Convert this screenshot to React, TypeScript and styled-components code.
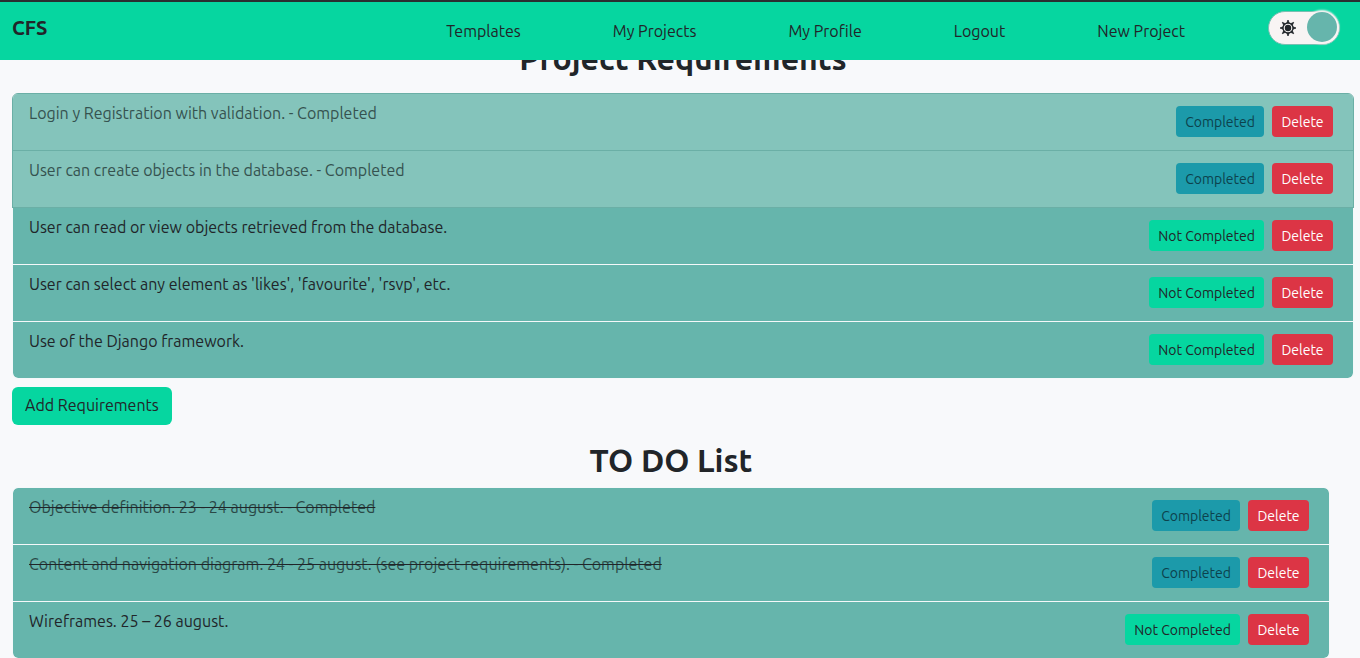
import React, { useState } from "react";
import styled, { createGlobalStyle } from "styled-components";

const color = {
  page: "#f8f9fb",
  accent: "#06d6a0",
  teal: "#66b5ac",
  tealLight: "#84c4bb",
  tealEdge: "#6bafa6",
  ink: "#212529",
  done: "#1c9aaa",
  danger: "#dc3545",
};

const GlobalStyle = createGlobalStyle`
  *, *::before, *::after { box-sizing: border-box; }
  body {
    margin: 0;
    background: ${color.page};
    color: ${color.ink};
    font-family: Ubuntu, "Noto Sans", "Open Sans", sans-serif;
    font-size: 16px;
    line-height: 24px;
  }
`;

const Header = styled.header`
  position: fixed;
  inset: 0 0 auto 0;
  z-index: 10;
  display: flex;
  align-items: flex-start;
  height: 60px;
  padding: 9px 20px 0 12px;
  background: ${color.accent};
  border-top: 2px solid #2a2e30;
`;

const Brand = styled.a`
  margin-right: auto;
  padding-top: 3px;
  color: inherit;
  font-size: 20px;
  font-weight: 600;
  line-height: 28px;
  text-decoration: none;
`;

const Nav = styled.nav`
  display: flex;
  gap: 92px;
  margin-right: 83px;
  padding-top: 8px;
`;

const NavLink = styled.a`
  color: inherit;
  text-decoration: none;
  white-space: nowrap;
`;

const Switch = styled.label`
  position: relative;
  display: flex;
  align-items: center;
  width: 72px;
  height: 34px;
  padding-left: 11px;
  border: 1px solid #79bfb2;
  border-radius: 17px;
  background: #f8f4f4;
  cursor: pointer;
`;

const SwitchInput = styled.input`
  position: absolute;
  inset: 0;
  margin: 0;
  opacity: 0;
`;

const Knob = styled.span<{ $left: boolean }>`
  position: absolute;
  top: 0;
  ${(p) => (p.$left ? "left: 2px;" : "right: 2px;")}
  width: 30px;
  height: 30px;
  border-radius: 50%;
  background: ${color.teal};
  box-shadow: 0 0 2px 2px #f8f4f4;
`;

const Main = styled.main`
  padding: 39px 6px 0 12px;
`;

const Title = styled.h2`
  margin: 0;
  padding-bottom: 16px;
  font-size: 32px;
  font-weight: 600;
  line-height: 38px;
  text-align: center;
`;

const Section = styled.section<{ $inset?: boolean }>`
  margin-right: ${(p) => (p.$inset ? "24px" : "0")};

  ${Title} {
    ${(p) => p.$inset && "padding-bottom: 8px;"}
  }
`;

const List = styled.ul`
  margin: 0;
  padding: 0;
  list-style: none;
`;

const Row = styled.li<{ $faded?: boolean }>`
  display: flex;
  align-items: flex-start;
  justify-content: space-between;
  gap: 16px;
  min-height: 58px;
  padding: 7px 20px 12px 16px;
  border: 1px solid ${(p) => (p.$faded ? color.tealEdge : "#f5f8fa")};
  background: ${(p) => (p.$faded ? color.tealLight : color.teal)};
  background-clip: padding-box;

  & + & { margin-top: -1px; }
  &:first-child { border-radius: 6px 6px 0 0; }
  &:last-child { border-radius: 0 0 6px 6px; }
  ${(p) => p.$faded && "position: relative; z-index: 1;"}
`;

const Label = styled.span<{ $muted?: boolean; $struck?: boolean }>`
  color: ${(p) => (p.$struck ? "#2a4947" : p.$muted ? "#35524f" : "inherit")};
  text-decoration: ${(p) => (p.$struck ? "line-through" : "none")};
  text-decoration-color: ${color.ink};
`;

const Actions = styled.div`
  display: flex;
  gap: 8px;
  padding-top: 5px;
`;

const SmallButton = styled.button<{ $kind: "done" | "open" | "danger" }>`
  min-width: 61px;
  height: 31px;
  padding: 2px 9px 0;
  border: 0;
  border-radius: 4px;
  background: ${(p) =>
    p.$kind === "done" ? color.done : p.$kind === "open" ? color.accent : color.danger};
  color: ${(p) =>
    p.$kind === "done" ? "#0c424d" : p.$kind === "open" ? color.ink : "#fff"};
  font: inherit;
  font-size: 14px;
  line-height: 21px;
  white-space: nowrap;
  cursor: pointer;
`;

const AddButton = styled.button`
  display: block;
  height: 38px;
  margin: 8px 0 16px;
  padding: 0 13px 2px;
  border: 0;
  border-radius: 6px;
  background: ${color.accent};
  color: inherit;
  font: inherit;
  cursor: pointer;
`;

const Sun = () => (
  <svg width="16" height="16" viewBox="0 0 16 16" aria-hidden="true">
    <path
      d="M8 0 9.3 3.4 6.7 3.4ZM8 16 9.3 12.6 6.7 12.6ZM0 8 3.4 6.7 3.4 9.3ZM16 8 12.6 6.7 12.6 9.3ZM2.3 2.3 5.7 3.9 3.9 5.7ZM13.7 2.3 10.3 3.9 12.1 5.7ZM2.3 13.7 3.9 10.3 5.7 12.1ZM13.7 13.7 10.3 12.1 12.1 10.3Z"
      fill="#212529"
      stroke="#212529"
      strokeWidth="0.8"
    />
    <circle cx="8" cy="8" r="5" fill="#f8f4f4" stroke="#212529" strokeWidth="1.3" />
    <circle cx="8" cy="8" r="3.2" fill="#212529" />
  </svg>
);

type Item = { text: string; done: boolean };

const requirements: Item[] = [
  { text: "Login y Registration with validation. - Completed", done: true },
  { text: "User can create objects in the database. - Completed", done: true },
  { text: "User can read or view objects retrieved from the database.", done: false },
  { text: "User can select any element as 'likes', 'favourite', 'rsvp', etc.", done: false },
  { text: "Use of the Django framework.", done: false },
];

const todos: Item[] = [
  { text: "Objective definition. 23 - 24 august. - Completed", done: true },
  {
    text: "Content and navigation diagram. 24 - 25 august. (see project-requirements). - Completed",
    done: true,
  },
  { text: "Wireframes. 25 – 26 august.", done: false },
];

const links = ["Templates", "My Projects", "My Profile", "Logout", "New Project"];

const Items = ({ items, strike }: { items: Item[]; strike?: boolean }) => (
  <List>
    {items.map(({ text, done }) => (
      <Row key={text} $faded={done && !strike}>
        <Label $muted={done} $struck={done && strike}>
          {text}
        </Label>
        <Actions>
          <SmallButton type="button" $kind={done ? "done" : "open"}>
            {done ? "Completed" : "Not Completed"}
          </SmallButton>
          <SmallButton type="button" $kind="danger">
            Delete
          </SmallButton>
        </Actions>
      </Row>
    ))}
  </List>
);

export default function App() {
  const [dark, setDark] = useState(false);
  return (
    <>
      <GlobalStyle />
      <Header>
        <Brand href="#">CFS</Brand>
        <Nav>
          {links.map((name) => (
            <NavLink key={name} href="#">
              {name}
            </NavLink>
          ))}
        </Nav>
        <Switch>
          <SwitchInput
            type="checkbox"
            aria-label="Dark theme"
            checked={dark}
            onChange={(e) => setDark(e.target.checked)}
          />
          <Sun />
          <Knob $left={dark} />
        </Switch>
      </Header>
      <Main>
        <Section>
          <Title>Project Requirements</Title>
          <Items items={requirements} />
          <AddButton type="button">Add Requirements</AddButton>
        </Section>
        <Section $inset>
          <Title>TO DO List</Title>
          <Items items={todos} strike />
        </Section>
      </Main>
    </>
  );
}
